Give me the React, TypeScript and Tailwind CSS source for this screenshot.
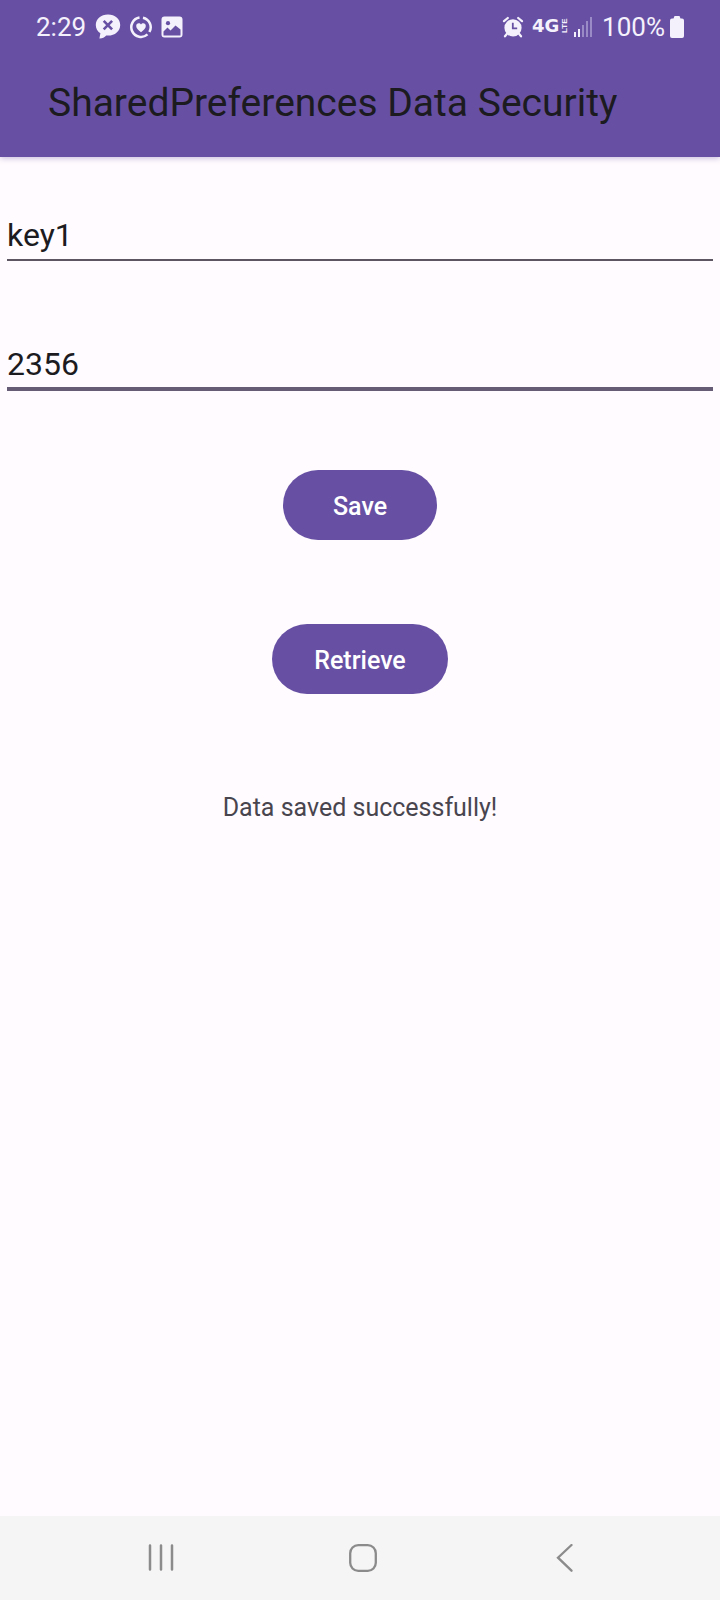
import { useState } from "react";

function ChatIcon() {
  return (
    <svg width="26" height="26" viewBox="0 0 26 26" aria-hidden="true">
      <path
        fill="#f5f1fc"
        d="M13 .6C6 .6.8 5 .8 10.900c0 3.600 1.700 6.400 4.600 8.400l-1 5.200c3 .1 5-1.200 6.800-3 .6.1 1.200.1 1.800.1 7 0 12.200-4.700 12.200-10.700S20 .6 13 .6Z"
      />
      <path stroke="#6750a4" strokeWidth="2.600" d="m8.700 6.900 8.400 8.400M17.100 6.900 8.700 15.300" />
    </svg>
  );
}

function HeartRingIcon() {
  return (
    <svg width="24" height="24" viewBox="0 0 24 24" aria-hidden="true">
      <g fill="none" stroke="#f5f1fc" strokeWidth="2.500">
        <path d="M10.500 2.600A9.700 9.700 0 1 0 18.500 19.400" />
        <path d="M14 2.700A9.700 9.700 0 0 1 20.400 17" />
      </g>
      <path
        fill="#f5f1fc"
        d="M12 17.200C9.500 15.200 7.200 13.200 7.200 10.900C7.200 9.300 8.300 8.200 9.700 8.200C10.700 8.200 11.500 8.700 12 9.600C12.500 8.700 13.300 8.200 14.300 8.200C15.700 8.200 16.800 9.300 16.800 10.900C16.800 13.200 14.500 15.200 12 17.200Z"
      />
    </svg>
  );
}

function PictureIcon() {
  return (
    <svg width="22" height="22" viewBox="0 0 22 22" aria-hidden="true">
      <rect x="1.500" y="1.500" width="19" height="19" rx="2" fill="#f5f1fc" stroke="#f5f1fc" strokeWidth="2" />
      <path fill="#6750a4" d="M2.500 15.500 6.500 11.500 9.500 14.500 14.500 9.500 19.500 13.500V19.500H2.500Z" />
      <circle cx="7" cy="7.200" r="2.100" fill="#6750a4" />
    </svg>
  );
}

function AlarmIcon() {
  return (
    <svg width="22" height="22" viewBox="0 0 22 22" aria-hidden="true">
      <circle cx="11" cy="11.800" r="8.600" fill="#f5f1fc" />
      <path
        fill="none"
        stroke="#f5f1fc"
        strokeWidth="2.200"
        strokeLinecap="round"
        d="M2 5.200 5.800 2M20 5.200 16.200 2M4.800 18 3 20.300M17.200 18l1.800 2.300"
      />
      <path fill="none" stroke="#6750a4" strokeWidth="1.800" d="M10.800 6.800v5.500h4.400" />
    </svg>
  );
}

function NetworkIcon() {
  return (
    <svg width="38" height="22" viewBox="0 0 38 22" role="img" aria-label="4G LTE">
      <text x="0" y="16" fontFamily="DejaVu Sans, sans-serif" fontWeight="700" fontSize="18" fill="#f5f1fc">
        4G
      </text>
      <text
        transform="translate(35 17) rotate(-90)"
        fontFamily="Liberation Sans, sans-serif"
        fontWeight="700"
        fontSize="8"
        fill="#f5f1fc"
      >
        LTE
      </text>
    </svg>
  );
}

function SignalIcon() {
  return (
    <svg width="18" height="20" viewBox="0 0 18 20" aria-hidden="true">
      <path fill="#f5f1fc" d="M0 15h2v5H0zM4 12h2v8H4z" />
      <path fill="#9a8ac6" d="M8 8h2v12H8zM12 4h2v16h-2zM16 0h2v20h-2z" />
    </svg>
  );
}

function BatteryIcon() {
  return (
    <svg width="14" height="22" viewBox="0 0 14 22" aria-hidden="true">
      <path
        fill="#f5f1fc"
        d="M4.500 0h5L10.500 2.500h1.500a2 2 0 0 1 2 2V20a2 2 0 0 1-2 2H2a2 2 0 0 1-2-2V4.500a2 2 0 0 1 2-2h1.500Z"
      />
    </svg>
  );
}

function StatusBar() {
  return (
    <div className="flex h-[54px] items-center justify-between px-9 text-[26px] leading-8 text-[#f5f1fc]">
      <div className="flex items-center">
        <span>2:29</span>
        <span className="ml-[9px] flex items-center gap-2">
          <ChatIcon />
          <HeartRingIcon />
          <PictureIcon />
        </span>
      </div>
      <div className="flex items-center">
        <AlarmIcon />
        <span className="ml-2">
          <NetworkIcon />
        </span>
        <span className="ml-1">
          <SignalIcon />
        </span>
        <span className="ml-2.5">100%</span>
        <span className="ml-[5px]">
          <BatteryIcon />
        </span>
      </div>
    </div>
  );
}

function NavigationBar() {
  return (
    <nav className="flex h-[84px] items-center justify-between bg-[#f5f5f5] pr-[115px] pl-[121px]">
      <button type="button" aria-label="Recent apps" className="flex h-12 w-20 items-center justify-center">
        <svg width="28" height="28" viewBox="0 0 28 28" fill="none" stroke="#8b8b8b" strokeWidth="2.500" strokeLinecap="round">
          <path d="M3 1.500v24M14 1.500v24M25 1.500v24" />
        </svg>
      </button>
      <button type="button" aria-label="Home" className="flex h-12 w-20 items-center justify-center">
        <svg width="28" height="28" viewBox="0 0 28 28" fill="none" stroke="#8b8b8b" strokeWidth="2.300">
          <rect x="1.200" y="1.200" width="25.600" height="25.600" rx="8" />
        </svg>
      </button>
      <button type="button" aria-label="Back" className="flex h-12 w-20 items-center justify-center">
        <svg width="28" height="28" viewBox="0 0 28 28" fill="none" stroke="#8b8b8b" strokeWidth="2.300" strokeLinecap="round">
          <path d="M20.500 1 7 13.700l13.500 13" />
        </svg>
      </button>
    </nav>
  );
}

export default function App() {
  const [key, setKey] = useState("key1");
  const [value, setValue] = useState("2356");
  const [message, setMessage] = useState("Data saved successfully!");

  return (
    <div className="flex min-h-screen flex-col bg-[#fffbfe] font-[Roboto,sans-serif]">
      <header className="bg-[#6750a4] shadow-[0_1px_6px_rgba(103,80,164,0.4)]">
        <StatusBar />
        <h1 className="px-12 pt-[25px] pb-[30px] text-[39px] leading-12 text-[#1c1b1f]">
          SharedPreferences Data Security
        </h1>
      </header>
      <main className="flex flex-1 flex-col items-center px-[7px] pt-[54px]">
        <input
          aria-label="Key"
          value={key}
          onChange={(e) => setKey(e.target.value)}
          className="h-[50px] w-full border-b-2 border-[#5d5562] text-[32px] leading-10 text-[#1c1b1f] outline-none"
        />
        <input
          aria-label="Value"
          value={value}
          onChange={(e) => setValue(e.target.value)}
          className="mt-20 h-[50px] w-full border-b-4 border-[#665c76] text-[32px] leading-10 text-[#1c1b1f] outline-none"
        />
        <button
          type="button"
          onClick={() => setMessage("Data saved successfully!")}
          className="mt-[79px] h-[70px] rounded-full bg-[#6750a4] px-[50px] pt-1 text-[25px] leading-8 font-medium text-white"
        >
          Save
        </button>
        <button
          type="button"
          onClick={() => setMessage(value)}
          className="mt-[84px] h-[70px] rounded-full bg-[#6750a4] px-[42px] pt-1 text-[25px] leading-8 font-medium text-white"
        >
          Retrieve
        </button>
        <p className="mt-[98px] text-[25px] leading-8 text-[#49454f]">{message}</p>
      </main>
      <NavigationBar />
    </div>
  );
}
